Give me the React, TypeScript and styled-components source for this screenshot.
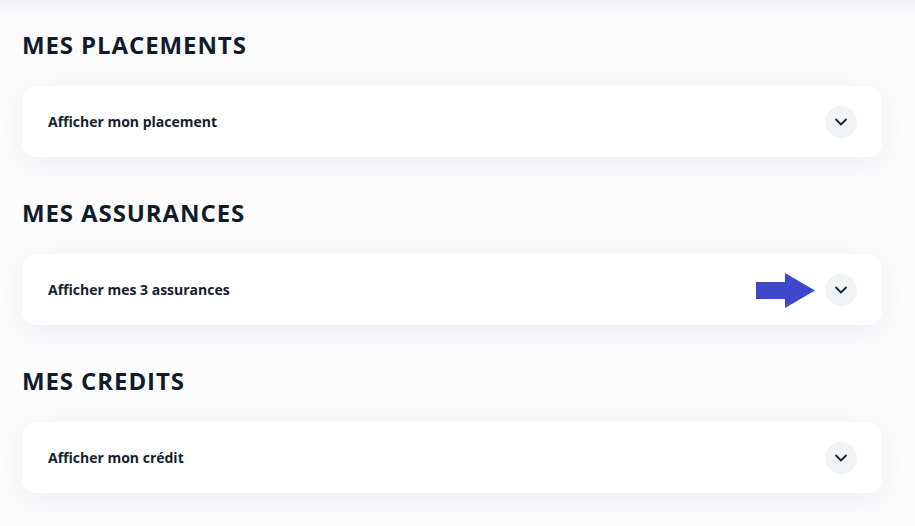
import styled, { createGlobalStyle } from "styled-components";

const GlobalStyle = createGlobalStyle`
  html, body {
    margin: 0;
    padding: 0;
    background: #fbfbfc;
    font-family: "Open Sans", "Liberation Sans", sans-serif;
  }
`;

const Page = styled.main`
  min-height: 526px;
  padding: 22px 33px 0 22px;
  background: linear-gradient(180deg, #f3f4f6 0px, #fafafb 18px, #fcfcfd 60px);
`;

const Section = styled.section`
  display: flex;
  flex-direction: column;
  margin-bottom: 33px;
`;

const Heading = styled.h2`
  margin: 10px 0 28px;
  font-size: 24px;
  line-height: 26px;
  font-weight: 700;
  letter-spacing: 0.9px;
  color: #101c2b;
`;

const Card = styled.div`
  position: relative;
  display: flex;
  align-items: center;
  justify-content: space-between;
  height: 71px;
  padding: 0 25px 0 26px;
  background: #ffffff;
  border-radius: 14px;
  box-shadow: 0 6px 34px rgba(30, 40, 80, 0.07);
`;

const Label = styled.span`
  font-size: 14px;
  font-weight: 700;
  color: #14202e;
`;

const Toggle = styled.button`
  display: flex;
  align-items: center;
  justify-content: center;
  width: 32px;
  height: 32px;
  padding: 0;
  border: none;
  border-radius: 50%;
  background: #f2f3f5;
  color: #0f2236;
  cursor: pointer;
`;

const Pointer = styled.svg`
  position: absolute;
  right: 66px;
  top: 19px;
`;

const Chevron = () => (
  <svg width="16" height="16" viewBox="0 0 16 16" fill="none">
    <path
      d="M3 5.5 L8 10.5 L13 5.5"
      stroke="currentColor"
      strokeWidth="1.8"
      strokeLinecap="round"
      strokeLinejoin="round"
    />
  </svg>
);

const sections = [
  { title: "MES PLACEMENTS", label: "Afficher mon placement" },
  { title: "MES ASSURANCES", label: "Afficher mes 3 assurances", marked: true },
  { title: "MES CREDITS", label: "Afficher mon crédit" },
];

export default function App() {
  return (
    <>
      <GlobalStyle />
      <Page>
        {sections.map((s) => (
          <Section key={s.title}>
            <Heading>{s.title}</Heading>
            <Card>
              <Label>{s.label}</Label>
              {s.marked && (
                <Pointer width="60" height="36" viewBox="0 0 60 36">
                  <polygon points="0,9 29,9 29,0 59,17.5 29,35 29,26 0,26" fill="#3f48cc" />
                </Pointer>
              )}
              <Toggle aria-label="Afficher">
                <Chevron />
              </Toggle>
            </Card>
          </Section>
        ))}
      </Page>
    </>
  );
}
